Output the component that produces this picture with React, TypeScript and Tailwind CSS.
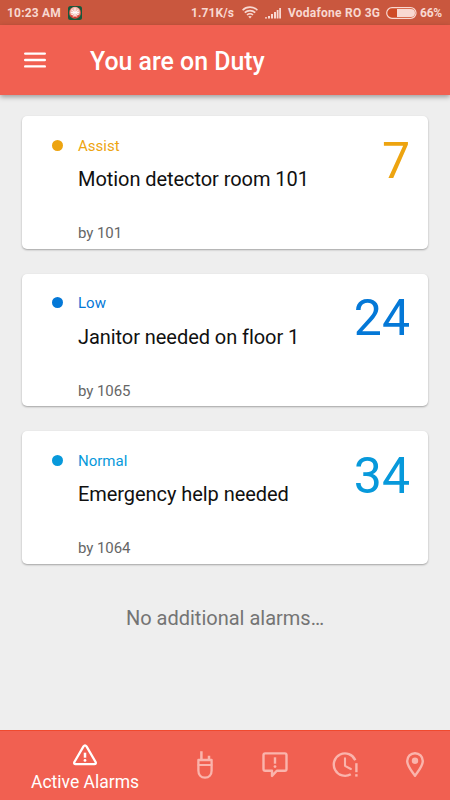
import React from "react";

type Alarm = {
  level: string;
  title: string;
  by: string;
  count: string;
  text: string;
  dot: string;
};

const alarms: Alarm[] = [
  { level: "Assist", title: "Motion detector room 101", by: "by 101", count: "7", text: "text-[#eda410]", dot: "bg-[#eda410]" },
  { level: "Low", title: "Janitor needed on floor 1", by: "by 1065", count: "24", text: "text-[#0478d7]", dot: "bg-[#0478d7]" },
  { level: "Normal", title: "Emergency help needed", by: "by 1064", count: "34", text: "text-[#0799db]", dot: "bg-[#0799db]" },
];

function StatusBar() {
  return (
    <div className="flex h-[25px] items-center bg-[#c9573e] pl-[7px] pr-2 text-[12px] font-bold leading-[25px] text-[#f8d8d1]">
      <span className="w-[61px] whitespace-nowrap pt-px tracking-[0.2px]">10:23 AM</span>
      <svg className="h-[14px] w-[14px]" viewBox="0 0 14 14">
        <rect width="14" height="14" rx="2.5" fill="#17583a" />
        <circle cx="7" cy="6.8" r="6" fill="#d9554a" />
        <circle cx="7" cy="6.1" r="5" fill="#f3bdb3" />
        <path d="M7 2v8M3.5 4l7 5M10.5 4l-7 5M3 6.5h8" stroke="#fff" strokeWidth=".9" />
        <path d="M3 10h1.6M9.4 10h1.6M6 11.5h2" stroke="#d4372d" strokeWidth="1.3" />
      </svg>
      <span className="ml-[109px] w-[51px] whitespace-nowrap pt-px tracking-[0.1px]">1.71K/s</span>
      <svg className="h-[13px] w-4" viewBox="0 0 16 13" fill="none" stroke="#f8d8d1" strokeWidth="1.6">
        <path d="M.6 4.2C4.6.1 11.4.1 15.4 4.2M2.8 6.7c2.9-2.8 7.5-2.8 10.4 0M5 9c1.7-1.6 4.3-1.6 6 0" />
        <path d="M6.2 10.6Q8 9.2 9.8 10.6L8 12.5Z" fill="#f8d8d1" stroke="none" />
      </svg>
      <svg className="ml-[7px] h-[12px] w-4" viewBox="0 0 16 12" fill="#f8d8d1">
        <path d="M0 10.3h2v1.2H0zM3 9h2v2.5H3zM6 7h2v4.5H6zM9 5h2v6.5H9zM11.7 3h1.8v8.5h-1.8zM14.2 1H16v10.5h-1.8z" />
      </svg>
      <span className="ml-[7px] w-[98px] whitespace-nowrap pt-px tracking-[0.25px]">Vodafone RO 3G</span>
      <svg className="mt-px h-3 w-[31px] shrink-0" viewBox="0 0 31 12">
        <rect x=".7" y=".7" width="29.3" height="10.6" rx="5.3" fill="#cf4a25" stroke="#f8d8d1" strokeWidth="1.2" />
        <path d="M11 2h14a4 4 0 0 1 0 8H11z" fill="#f8d8d1" />
      </svg>
      <span className="ml-[3px] whitespace-nowrap pt-px tracking-[-0.2px]">66%</span>
    </div>
  );
}

function AlarmCard({ alarm }: { alarm: Alarm }) {
  return (
    <article className="flex h-[132.5px] justify-between rounded-[5px] bg-white pl-[30px] pr-[18px] shadow-[0_1px_2px_rgba(0,0,0,0.32)]">
      <div className="flex gap-[15px]">
        <span className={`mt-[23.5px] h-[11px] w-[11px] rounded-full ${alarm.dot}`} />
        <div className="flex flex-col whitespace-nowrap pt-[19.7px]">
          <span className={`text-[15px] leading-5 ${alarm.text}`}>{alarm.level}</span>
          <span className="mt-[11.3px] text-[20px] leading-6 tracking-[-0.06px] text-[#101010] [font-variant-ligatures:common-ligatures]">{alarm.title}</span>
          <span className="mt-8 text-[15px] leading-5 tracking-[-0.06px] text-[#666]">{alarm.by}</span>
        </div>
      </div>
      <span className={`pt-[14.5px] text-[50px] leading-[60px] ${alarm.text}`}>{alarm.count}</span>
    </article>
  );
}

const iconProps = {
  fill: "none",
  stroke: "currentColor",
  strokeLinecap: "round" as const,
  strokeLinejoin: "round" as const,
};

function BottomNav() {
  return (
    <nav className="flex h-[70px] border-t border-[#f04a2e] bg-[#f16051] text-[#fab4ac]">
      <div className="flex w-[170px] flex-col items-center pt-[13px] text-white">
        <svg className="h-[23px] w-[26px]" viewBox="0 0 26 23" {...iconProps}>
          <path d="M11.5 2.4Q13 .3 14.5 2.4L23.6 18Q24.4 20 22.3 20.2H3.7Q1.6 20 2.4 18Z" strokeWidth="2.3" />
          <path d="M13 8.7v5" strokeWidth="2.5" strokeLinecap="butt" />
          <circle cx="13" cy="16.4" r="1.4" fill="currentColor" stroke="none" />
        </svg>
        <span className="mt-[3px] text-[17.5px] leading-6">Active Alarms</span>
      </div>
      <div className="flex w-[70px] justify-center pt-5">
        <svg className="h-[30px] w-5" viewBox="0 0 20 30" {...iconProps}>
          <path d="M3.4 9H16.6V19.5C16.6 24 14 26.7 10 26.7S3.4 24 3.4 19.5Z" strokeWidth="2.3" />
          <path d="M3.5 14h13" strokeWidth="2" />
          <path d="M6.4 8.5V.3M14 8.5V4.8" strokeWidth="2.5" strokeLinecap="butt" />
        </svg>
      </div>
      <div className="flex w-[70px] justify-center pt-5">
        <svg className="h-[28px] w-7" viewBox="0 0 28 28" {...iconProps}>
          <path d="M4.2 2.4H23.8Q25.5 2.4 25.5 4.1V18Q25.5 19.7 23.8 19.7H15.8L11 24.9V19.7H4.2Q2.5 19.7 2.5 18V4.1Q2.5 2.4 4.2 2.4Z" strokeWidth="2.4" />
          <path d="M14 6.3v6.4" strokeWidth="2.4" strokeLinecap="butt" />
          <circle cx="14" cy="15.6" r="1.4" fill="currentColor" stroke="none" />
        </svg>
      </div>
      <div className="flex w-[70px] justify-center pt-5">
        <svg className="h-7 w-7" viewBox="0 0 28 28" {...iconProps}>
          <path d="M24.3 9.2A11.2 11.2 0 1 0 19.8 23.2" strokeWidth="2.4" strokeLinecap="butt" />
          <path d="M14 7.4V14.8L19.8 18" strokeWidth="2.1" />
          <path d="M25.4 12.2v9" strokeWidth="2.4" strokeLinecap="butt" />
          <rect x="24.2" y="23.2" width="2.4" height="2.4" fill="currentColor" stroke="none" />
        </svg>
      </div>
      <div className="flex w-[70px] justify-center pt-5">
        <svg className="h-7 w-5" viewBox="0 0 20 28" {...iconProps}>
          <path d="M10 24.8C7 20.4 2.2 15.2 2.2 10.1C2.2 5.4 5.7 2.2 10 2.2S17.8 5.4 17.8 10.1C17.8 15.2 13 20.4 10 24.8Z" strokeWidth="2.4" />
          <circle cx="10" cy="9.8" r="3.2" fill="currentColor" stroke="none" />
        </svg>
      </div>
    </nav>
  );
}

export default function App() {
  return (
    <div className="flex h-[800px] w-[450px] flex-col overflow-hidden bg-[#eeeeee] font-[Roboto,sans-serif]">
      <StatusBar />
      <header className="z-10 flex h-[70px] shrink-0 items-center bg-[#f16051] pl-6 shadow-[0_2px_5px_rgba(0,0,0,0.35)]">
        <svg className="h-4 w-[22px]" viewBox="0 0 22 16" stroke="#fff" strokeWidth="2.4" strokeLinecap="round">
          <path d="M1.2 1.6h19.6M1.2 8h19.6M1.2 14.4h19.6" />
        </svg>
        <h1 className="ml-11 pt-1 text-[24.9px] font-medium leading-8 text-white">You are on Duty</h1>
      </header>
      <main className="flex grow flex-col gap-[25px] px-[22px] pt-[21.2px]">
        {alarms.map((alarm) => (
          <AlarmCard key={alarm.level} alarm={alarm} />
        ))}
        <p className="mt-[15px] text-center text-[20px] leading-7 text-[#747474]">No additional alarms…</p>
      </main>
      <BottomNav />
    </div>
  );
}
